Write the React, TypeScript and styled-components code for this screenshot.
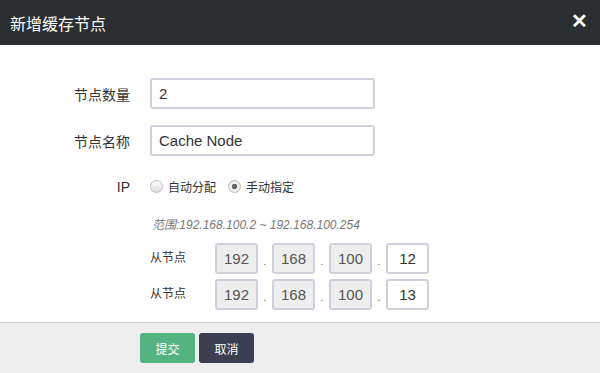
import React from 'react';
import styled, { createGlobalStyle } from 'styled-components';

const GlobalStyle = createGlobalStyle`
  html, body {
    margin: 0;
    padding: 0;
    background: #fff;
    font-family: "Liberation Sans", "Noto Sans CJK SC", sans-serif;
  }
`;

const Dialog = styled.div`
  width: 600px;
  height: 373px;
  display: flex;
  flex-direction: column;
  background: #fff;
  overflow: hidden;
`;

const Header = styled.div`
  height: 45px;
  flex-shrink: 0;
  background: #2a2e30;
  display: flex;
  align-items: center;
  justify-content: space-between;
  padding: 0 12px 0 10px;
  color: #fff;
`;

const Title = styled.h4`
  margin: 0;
  font-size: 16px;
  font-weight: normal;
  color: #fff;
`;

const Close = styled.span`
  font-size: 20px;
  font-weight: bold;
  line-height: 1;
  margin-top: -4px;
`;

const Body = styled.div`
  flex: 1;
  padding: 33px 0 0;
  display: flex;
  flex-direction: column;
`;

const Row = styled.div<{ $gap?: number }>`
  display: flex;
  align-items: center;
  margin-bottom: ${p => p.$gap ?? 16}px;
`;

const Label = styled.label`
  width: 150px;
  text-align: right;
  padding-right: 20px;
  box-sizing: border-box;
  font-size: 14px;
  color: #333;
  flex-shrink: 0;
`;

const TextInput = styled.input`
  width: 225px;
  height: 31px;
  box-sizing: border-box;
  border: 2px solid #d0cfdc;
  border-radius: 3px;
  padding: 0 7px;
  font-family: "Liberation Sans", "Noto Sans CJK SC", sans-serif;
  font-size: 15px;
  color: #333;
  outline: none;
`;

const Radio = styled.span<{ $checked?: boolean }>`
  display: inline-flex;
  align-items: center;
  font-size: 12px;
  color: #333;
  margin-right: 12px;

  &::before {
    content: '';
    width: 11px;
    height: 11px;
    border-radius: 50%;
    border: 1px solid #bbb;
    background: ${p => (p.$checked ? 'radial-gradient(circle, #666 0 2.5px, #eee 3px)' : 'linear-gradient(#fff, #ddd)')};
    margin-right: 5px;
  }
`;

const Indent = styled.div`
  padding-left: 150px;
`;

const Hint = styled.div`
  font-size: 12px;
  font-style: italic;
  color: #777;
  margin: 6px 0 11px 2px;
`;

const IpRow = styled.div`
  display: flex;
  align-items: center;
  margin-bottom: 5px;
`;

const IpLabel = styled.span`
  width: 65px;
  font-size: 12px;
  color: #333;
  margin-top: -5px;
`;

const Octet = styled.input<{ $editable?: boolean }>`
  width: 43px;
  height: 31px;
  box-sizing: border-box;
  border: 2px solid #d0cfdc;
  border-radius: 3px;
  background: ${p => (p.$editable ? '#fff' : '#eee')};
  text-align: center;
  font-family: "Liberation Sans", sans-serif;
  font-size: 15px;
  color: ${p => (p.$editable ? '#333' : '#555')};
  padding: 0;
  outline: none;
`;

const Dot = styled.span`
  width: 14px;
  text-align: center;
  font-size: 10px;
  color: #555;
  padding-top: 6px;
`;

const Footer = styled.div`
  height: 50px;
  flex-shrink: 0;
  background: #eee;
  border-top: 1px solid #cfcdda;
  display: flex;
  align-items: center;
  padding-left: 140px;
  gap: 4px;
`;

const Button = styled.button<{ $kind: 'ok' | 'cancel' }>`
  width: 55px;
  height: 30px;
  border: none;
  border-radius: 3px;
  color: #fff;
  font-family: "Liberation Sans", "Noto Sans CJK SC", sans-serif;
  font-size: 12px;
  background: ${p => (p.$kind === 'ok' ? '#55b383' : '#3b3f4f')};
`;

const nodes = [
  { label: '从节点', last: '12' },
  { label: '从节点', last: '13' },
];

export default function App() {
  return (
    <>
      <GlobalStyle />
      <Dialog>
        <Header>
          <Title>新增缓存节点</Title>
          <Close>✕</Close>
        </Header>
        <Body>
          <Row>
            <Label>节点数量</Label>
            <TextInput defaultValue="2" />
          </Row>
          <Row $gap={22}>
            <Label>节点名称</Label>
            <TextInput defaultValue="Cache Node" />
          </Row>
          <Row $gap={14}>
            <Label>IP</Label>
            <Radio>自动分配</Radio>
            <Radio $checked>手动指定</Radio>
          </Row>
          <Indent>
            <Hint>范围:192.168.100.2 ~ 192.168.100.254</Hint>
            {nodes.map((n, i) => (
              <IpRow key={i}>
                <IpLabel>{n.label}</IpLabel>
                <Octet defaultValue="192" disabled />
                <Dot>.</Dot>
                <Octet defaultValue="168" disabled />
                <Dot>.</Dot>
                <Octet defaultValue="100" disabled />
                <Dot>.</Dot>
                <Octet defaultValue={n.last} $editable />
              </IpRow>
            ))}
          </Indent>
        </Body>
        <Footer>
          <Button $kind="ok">提交</Button>
          <Button $kind="cancel">取消</Button>
        </Footer>
      </Dialog>
    </>
  );
}
